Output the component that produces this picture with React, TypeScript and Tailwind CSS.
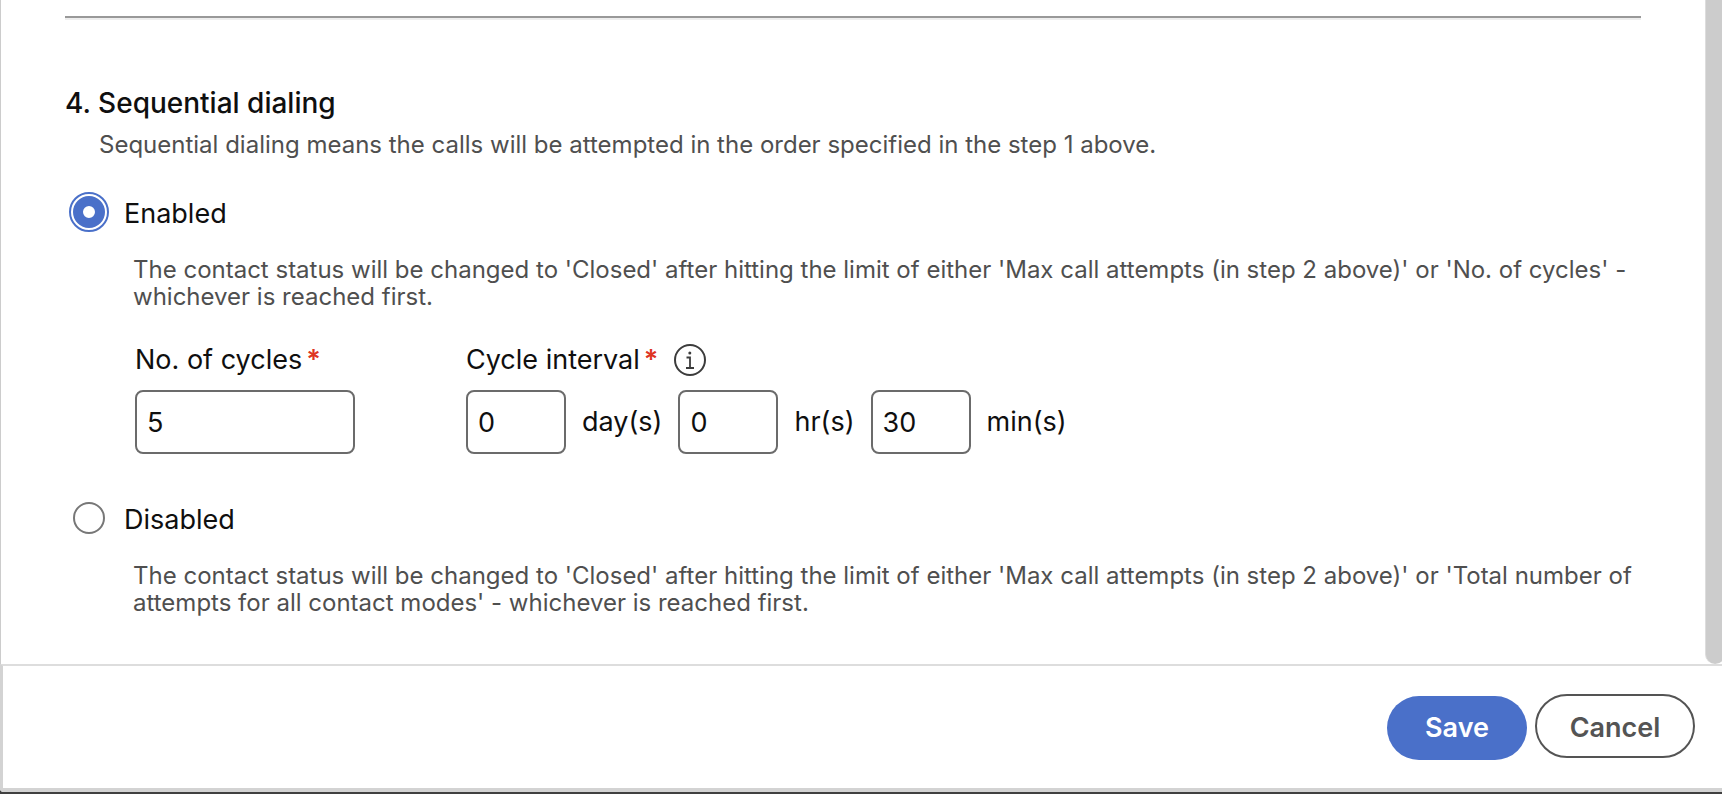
import { useState } from "react";
import type { ReactNode } from "react";

function InfoIcon() {
  return (
    <svg width="32" height="32" viewBox="0 0 32 32" fill="none" stroke="#3c3c3c" aria-hidden="true">
      <circle cx="16" cy="16" r="15" strokeWidth="2" />
      <path d="M12.5 13.5H16V24M12 24h8" strokeWidth="1.8" />
      <circle cx="15.8" cy="9" r="1.5" fill="#3c3c3c" stroke="none" />
    </svg>
  );
}

type ModeProps = {
  id: string;
  label: string;
  checked: boolean;
  onSelect: () => void;
  children: ReactNode;
};

function Mode({ id, label, checked, onSelect, children }: ModeProps) {
  return (
    <div>
      <div className="ml-1 flex h-10 items-center gap-[15px]">
        <span className="flex size-10 shrink-0 items-center justify-center">
          <input
            id={id}
            type="radio"
            name="sequential-dialing"
            checked={checked}
            onChange={onSelect}
            className="size-8 appearance-none rounded-full border-2 border-[#777777] bg-white checked:border-[10px] checked:border-[#4a70c9] checked:outline-2 checked:outline-offset-2 checked:outline-[#4a70c9]"
          />
        </span>
        <label htmlFor={id} className="pt-1 text-[27px] leading-8">
          {label}
        </label>
      </div>
      <div className="mt-6 ml-17">{children}</div>
    </div>
  );
}

function Hint({ children }: { children: ReactNode }) {
  return <p className="text-2xl leading-[27px] text-[#4f4f4f]">{children}</p>;
}

const inputClass =
  "h-16 rounded-lg border-2 border-[#6b6b6b] bg-white px-2.5 text-[27px] text-[#0f0f0f] outline-none";

function IntervalField({ id, unit, value }: { id: string; unit: string; value: string }) {
  return (
    <div className="flex items-center gap-4">
      <input id={id} type="text" defaultValue={value} className={`${inputClass} w-25`} />
      <label htmlFor={id} className="text-[27px] leading-8">
        {unit}
      </label>
    </div>
  );
}

function Required() {
  return <span className="ml-1 font-semibold text-[#de3423]">*</span>;
}

export default function App() {
  const [enabled, setEnabled] = useState(true);
  return (
    <div className="flex min-h-screen flex-col bg-[#404040] pb-0.5 font-['Inter','Liberation_Sans',sans-serif] text-[#0f0f0f]">
      <div className="flex flex-1 flex-col overflow-hidden rounded-bl-sm bg-white">
        <main className="flex flex-1 border-l border-[#cccccc]">
          <div className="min-w-0 flex-1 pt-4 pr-16 pb-9 pl-16">
            <hr className="h-1 border-t-2 border-b-2 border-t-[#999999] border-b-[#eeeeee]" />
            <section className="mt-[67px]">
              <h2 className="text-[28px] leading-8 font-medium">4. Sequential dialing</h2>
              <p className="mt-2.5 ml-8.5 text-2xl leading-8 text-[#4f4f4f]">
                Sequential dialing means the calls will be attempted in the order specified in the step 1 above.
              </p>
              <div className="mt-[31px] flex flex-col gap-11">
                <Mode id="mode-enabled" label="Enabled" checked={enabled} onSelect={() => setEnabled(true)}>
                  <Hint>
                    The contact status will be changed to 'Closed' after hitting the limit of either 'Max call attempts
                    (in step 2 above)' or 'No. of cycles' - whichever is reached first.
                  </Hint>
                  <div className="mt-[34px] ml-0.5 flex gap-[111px]">
                    <div className="flex flex-col gap-3.5">
                      <label htmlFor="cycles" className="text-[27px] leading-8">
                        No. of cycles
                        <Required />
                      </label>
                      <input id="cycles" type="text" defaultValue="5" className={`${inputClass} w-55`} />
                    </div>
                    <div className="flex flex-col gap-3.5">
                      <div className="flex items-center gap-4">
                        <label htmlFor="days" className="text-[27px] leading-8">
                          Cycle interval
                          <Required />
                        </label>
                        <button type="button" aria-label="About cycle interval">
                          <InfoIcon />
                        </button>
                      </div>
                      <div className="flex gap-4">
                        <IntervalField id="days" unit="day(s)" value="0" />
                        <IntervalField id="hours" unit="hr(s)" value="0" />
                        <IntervalField id="minutes" unit="min(s)" value="30" />
                      </div>
                    </div>
                  </div>
                </Mode>
                <Mode id="mode-disabled" label="Disabled" checked={!enabled} onSelect={() => setEnabled(false)}>
                  <Hint>
                    The contact status will be changed to 'Closed' after hitting the limit of either 'Max call attempts
                    (in step 2 above)' or 'Total number of attempts for all contact modes' - whichever is reached first.
                  </Hint>
                </Mode>
              </div>
            </section>
          </div>
          <div className="w-[17px] shrink-0 overflow-hidden">
            <div className="h-full w-5 rounded-b-full border-l border-[#dddddd] bg-[#cccccc]" />
          </div>
        </main>
        <footer className="flex items-start justify-end gap-2 border-t-2 border-b-4 border-l-3 border-t-[#dddddd] border-b-[#d3d3d3] border-l-[#d3d3d3] pt-7 pr-[27px] pb-7">
          <button
            type="button"
            className="mt-0.5 h-16 w-35 rounded-full bg-[#4a70c9] text-[27px] font-semibold text-white"
          >
            Save
          </button>
          <button
            type="button"
            className="h-16 w-40 rounded-full border-2 border-[#545454] bg-white pt-1 text-[27px] font-semibold text-[#545454]"
          >
            Cancel
          </button>
        </footer>
      </div>
    </div>
  );
}
